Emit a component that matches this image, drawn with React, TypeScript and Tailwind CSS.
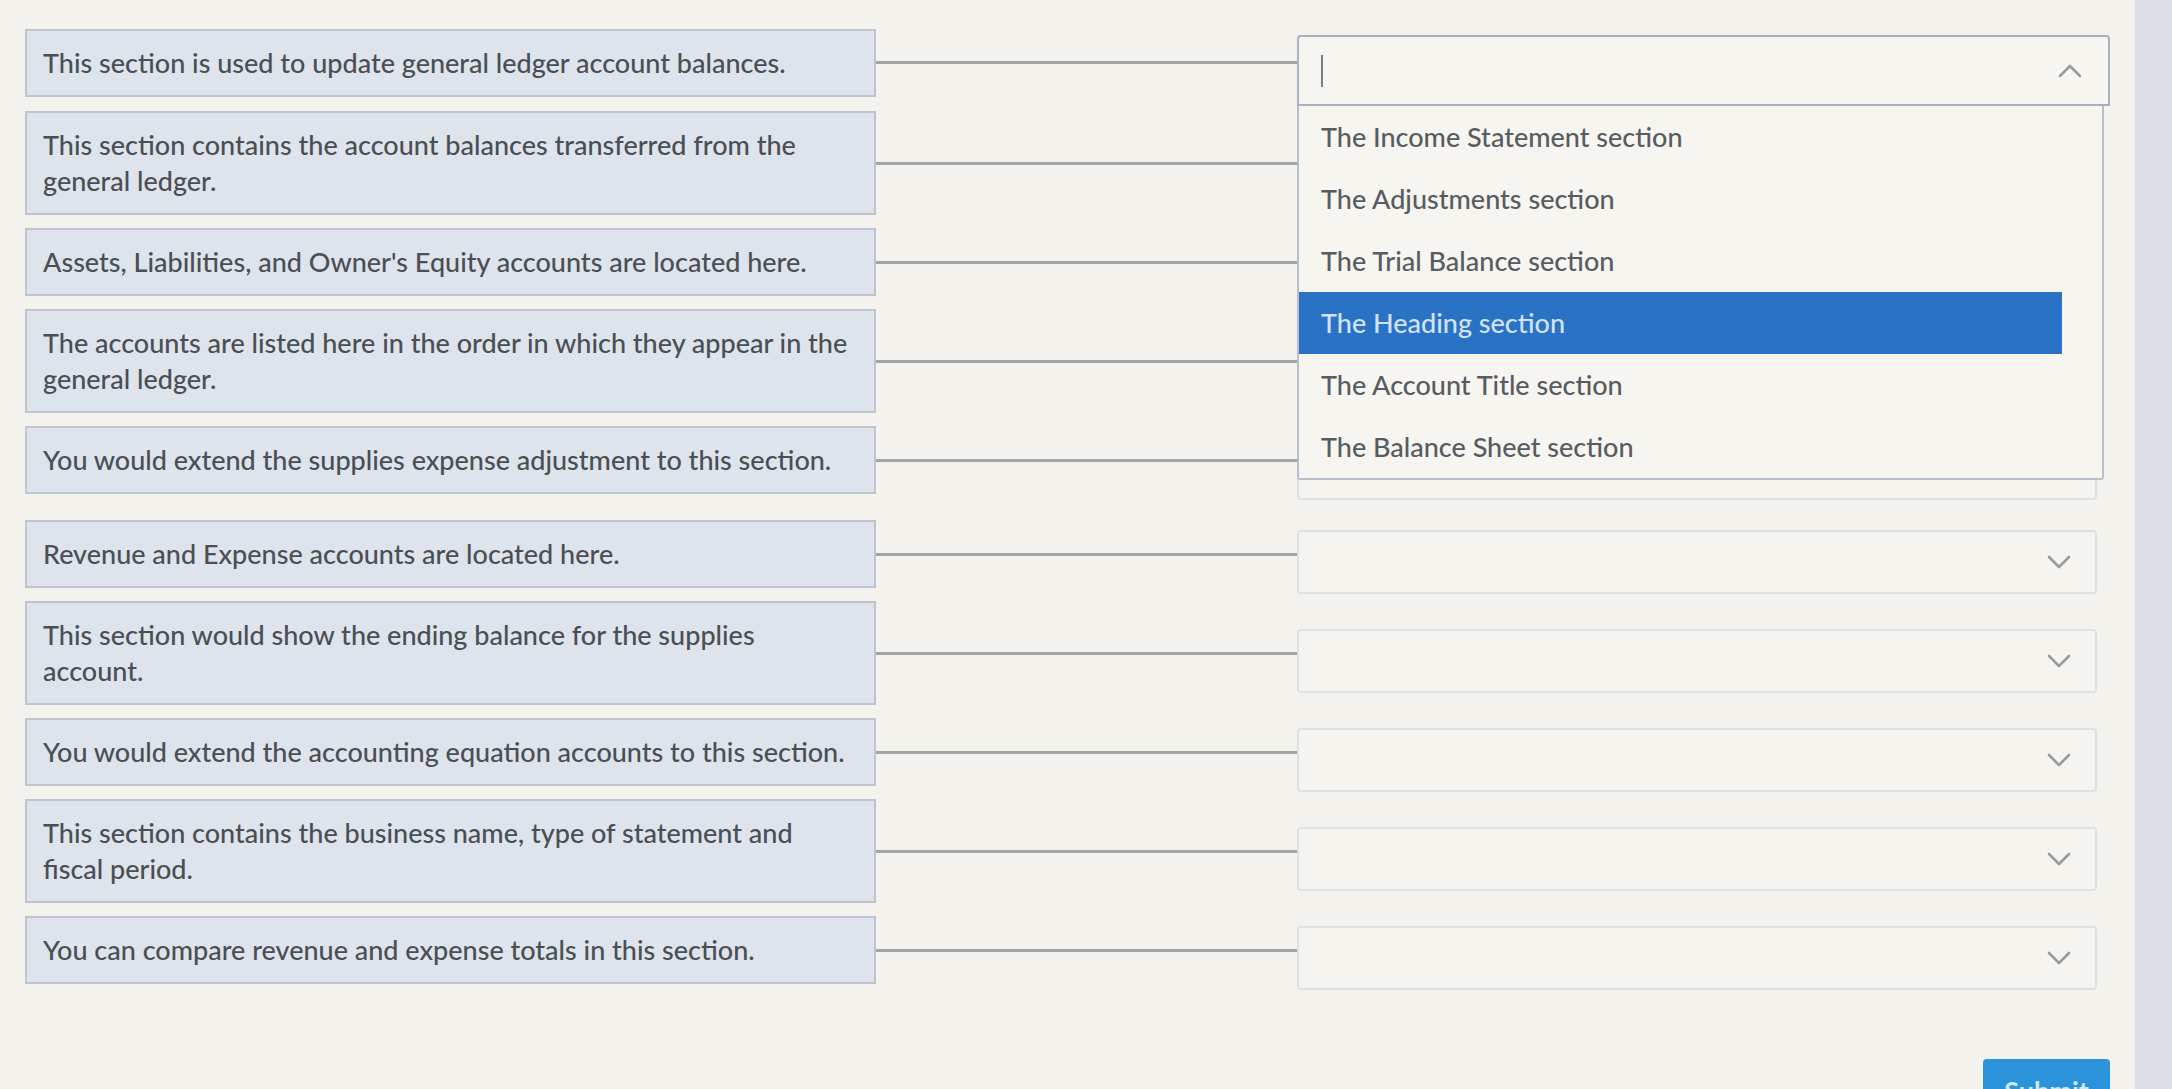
import React from "react";

type Row = {
  lines: string[];
  extraTop?: boolean;
};

const rows: Row[] = [
  { lines: ["This section is used to update general ledger account balances."] },
  {
    lines: [
      "This section contains the account balances transferred from the",
      "general ledger.",
    ],
  },
  { lines: ["Assets, Liabilities, and Owner's Equity accounts are located here."] },
  {
    lines: [
      "The accounts are listed here in the order in which they appear in the",
      "general ledger.",
    ],
  },
  { lines: ["You would extend the supplies expense adjustment to this section."] },
  { lines: ["Revenue and Expense accounts are located here."], extraTop: true },
  {
    lines: [
      "This section would show the ending balance for the supplies",
      "account.",
    ],
  },
  { lines: ["You would extend the accounting equation accounts to this section."] },
  {
    lines: [
      "This section contains the business name, type of statement and",
      "fiscal period.",
    ],
  },
  { lines: ["You can compare revenue and expense totals in this section."] },
];

const options = [
  "The Income Statement section",
  "The Adjustments section",
  "The Trial Balance section",
  "The Heading section",
  "The Account Title section",
  "The Balance Sheet section",
];

function Chevron({ up }: { up?: boolean }) {
  return (
    <svg width="24" height="15" viewBox="0 0 24 15" fill="none">
      <path
        d={up ? "M2 13 L12 3 L22 13" : "M2 2 L12 12 L22 2"}
        stroke="#9a9b9d"
        strokeWidth="2.6"
        strokeLinecap="round"
        strokeLinejoin="round"
      />
    </svg>
  );
}

function OpenSelect() {
  return (
    <div className="relative translate-y-[8px] w-[813px] h-[71px] shrink-0 rounded-t-[4px] border-2 border-[#a7b1bf] bg-[#f6f5f0] flex items-center pl-[22px] pr-[26px]">
      <span className="w-[2px] h-[32px] bg-[#7a7d82]" />
      <span className="ml-auto">
        <Chevron up />
      </span>

      {/* open option list */}
      <div className="absolute left-[-2px] top-[69px] w-[807px] border-2 border-t-0 border-[#b7bfca] bg-[#f6f5f0] rounded-b-[3px] z-10 text-[27px]">
        {options.map((o, i) => (
          <div
            key={o}
            className={
              i === 3
                ? "h-[62px] mr-[40px] flex items-center pl-[22px] bg-[#2a72c6] text-[#d3e3f6]"
                : "h-[62px] mr-[40px] flex items-center pl-[22px] text-[#585c61]"
            }
          >
            {o}
          </div>
        ))}
      </div>
    </div>
  );
}

function ClosedSelect() {
  return (
    <div className="translate-y-[8px] w-[800px] h-[64px] shrink-0 rounded-[4px] border-2 border-[#dde1e4] bg-[#f5f4ef] flex items-center justify-end pr-[24px]">
      <Chevron />
    </div>
  );
}

export default function App() {
  return (
    <div
      className="relative w-full h-[1089px] overflow-hidden bg-[#f3f2ec] text-[27px] leading-[36px] font-medium text-[#4a4f54]"
      style={{ fontFamily: "Lato, 'Open Sans', sans-serif" }}
    >
      <div className="flex">
        <div className="flex-1 pl-[25px] pt-[27px] flex flex-col gap-[13px]">
          {rows.map((row, i) => (
            <div
              key={i}
              className={
                i === 0
                  ? "relative z-20 flex items-center"
                  : row.extraTop
                  ? "flex items-center mt-[13px]"
                  : "flex items-center"
              }
            >
              <div className="w-[851px] shrink-0 border-2 border-[#bec5cd] bg-[#dee4eb] px-[16px] py-[14px]">
                {row.lines.map((l, j) => (
                  <div key={j} className="whitespace-nowrap">
                    {l}
                  </div>
                ))}
              </div>
              <div className="w-[421px] h-[3px] bg-[#a3a4a4] shrink-0" />
              {i === 0 ? <OpenSelect /> : <ClosedSelect />}
            </div>
          ))}
        </div>
        <div className="w-[37px] h-[1089px] bg-[#dcdfe5] shrink-0" />
      </div>

      <button className="absolute left-[1983px] top-[1059px] w-[127px] h-[60px] rounded-[4px] bg-[#2a93d9] text-[#cfe6f7] text-[27px] font-bold pt-[14px] flex justify-center items-start">
        Submit
      </button>
    </div>
  );
}
